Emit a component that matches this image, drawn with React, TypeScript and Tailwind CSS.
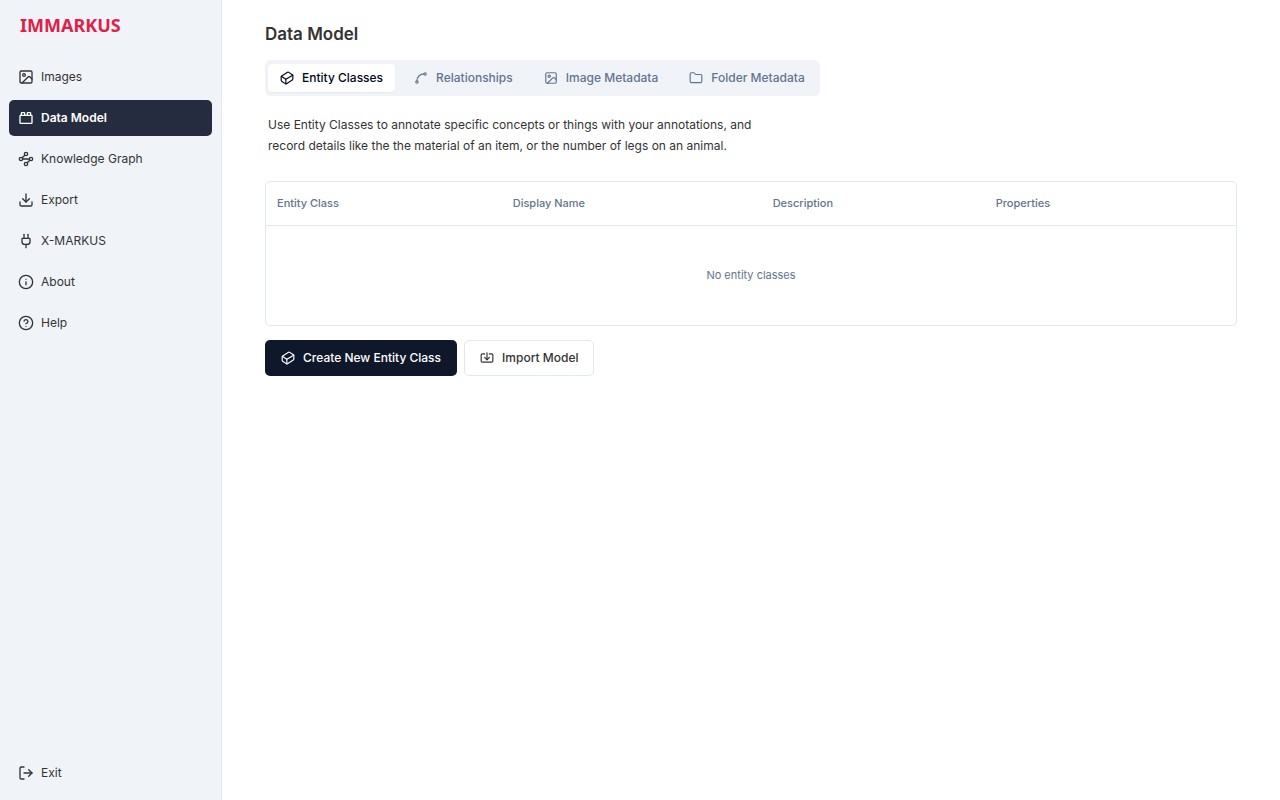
import { useState } from "react";
import {
  CircleHelp,
  Cuboid,
  Download,
  Folder,
  Image,
  Import,
  Info,
  LogOut,
  Plug,
  Spline,
  ToyBrick,
  Waypoints,
} from "lucide-react";
import clsx from "clsx";

const NAV_ITEMS = [
  { label: "Images", href: "#/images", icon: Image },
  { label: "Data Model", href: "#/model", icon: ToyBrick },
  { label: "Knowledge Graph", href: "#/graph", icon: Waypoints },
  { label: "Export", href: "#/export", icon: Download },
  { label: "X-MARKUS", href: "#/markus", icon: Plug },
  { label: "About", href: "#/about", icon: Info },
  { label: "Help", href: "#/help", icon: CircleHelp },
];

const TABS = [
  { label: "Entity Classes", icon: Cuboid },
  { label: "Relationships", icon: Spline },
  { label: "Image Metadata", icon: Image },
  { label: "Folder Metadata", icon: Folder },
];

const Sidebar = () => {
  return (
    <aside className="flex w-[222px] shrink-0 flex-col justify-between border-r border-slate-200 bg-[#f0f4f9] px-[9px] pb-[9px]">
      <div>
        <h1 className="px-[11px] pt-[11px] font-['Noto_Sans',sans-serif] text-lg leading-7 font-bold text-[#e11d48]">
          IMMARKUS
        </h1>

        <nav className="mt-5">
          <ul className="flex flex-col gap-[5px]">
            {NAV_ITEMS.map(({ label, href, icon: Icon }) => (
              <li key={label}>
                <a
                  href={href}
                  className={clsx(
                    "flex h-9 items-center gap-[7px] rounded-[5px] px-[9px] text-xs",
                    label === "Data Model"
                      ? "bg-[#262c3f] font-semibold text-white"
                      : "text-[#333333]"
                  )}
                >
                  <Icon className="size-4" />
                  {label}
                </a>
              </li>
            ))}
          </ul>
        </nav>
      </div>

      <button className="flex h-9 items-center gap-[7px] px-[9px] text-xs text-[#333333]">
        <LogOut className="size-4" />
        Exit
      </button>
    </aside>
  );
};

const EntityTable = () => {
  return (
    <div className="mt-[25px] rounded-[5px] border border-slate-200">
      <table className="w-full table-fixed text-[11px] text-slate-500">
        <colgroup>
          <col className="w-[24.3%]" />
          <col className="w-[26.8%]" />
          <col className="w-[23%]" />
          <col />
        </colgroup>
        <thead>
          <tr className="h-[43px] border-b border-slate-200 text-left">
            <th className="px-[11px] font-medium">Entity Class</th>
            <th className="px-[11px] font-medium">Display Name</th>
            <th className="px-[11px] font-medium">Description</th>
            <th className="px-[11px] font-medium">Properties</th>
          </tr>
        </thead>
        <tbody>
          <tr className="h-[100px]">
            <td colSpan={4} className="text-center">
              No entity classes
            </td>
          </tr>
        </tbody>
      </table>
    </div>
  );
};

const App = () => {
  const [activeTab, setActiveTab] = useState("Entity Classes");

  return (
    <div className="flex min-h-screen bg-white font-['Inter',sans-serif] text-[#333333]">
      <Sidebar />

      <main className="min-w-0 flex-1 px-[43px] py-5">
        <h2 className="text-[17px] leading-7 font-semibold">Data Model</h2>

        <div
          role="tablist"
          className="mt-3 inline-flex h-9 items-center gap-[7px] rounded-md bg-[#f0f4f9] px-[3px] align-top"
        >
          {TABS.map(({ label, icon: Icon }) => (
            <button
              key={label}
              role="tab"
              aria-selected={activeTab === label}
              onClick={() => setActiveTab(label)}
              className={clsx(
                "flex h-7 items-center gap-2 rounded-sm px-3 text-xs font-medium",
                activeTab === label ? "bg-white text-slate-950 shadow-xs" : "text-slate-500"
              )}
            >
              <Icon className="size-[14px]" />
              {label}
            </button>
          ))}
        </div>

        <p className="mt-[18px] max-w-[520px] px-[3px] text-xs leading-[21px]">
          Use Entity Classes to annotate specific concepts or things with your annotations, and
          record details like the the material of an item, or the number of legs on an animal.
        </p>

        <EntityTable />

        <div className="mt-[14px] flex gap-[7px]">
          <button className="flex h-9 items-center gap-2 rounded-[5px] bg-[#0f172a] px-4 text-xs font-medium text-white">
            <Cuboid className="size-[14px]" />
            Create New Entity Class
          </button>
          <button className="flex h-9 items-center gap-2 rounded-[5px] border border-slate-200 px-[15px] text-xs font-medium">
            <Import className="size-[14px]" />
            Import Model
          </button>
        </div>
      </main>
    </div>
  );
};

export default App;
